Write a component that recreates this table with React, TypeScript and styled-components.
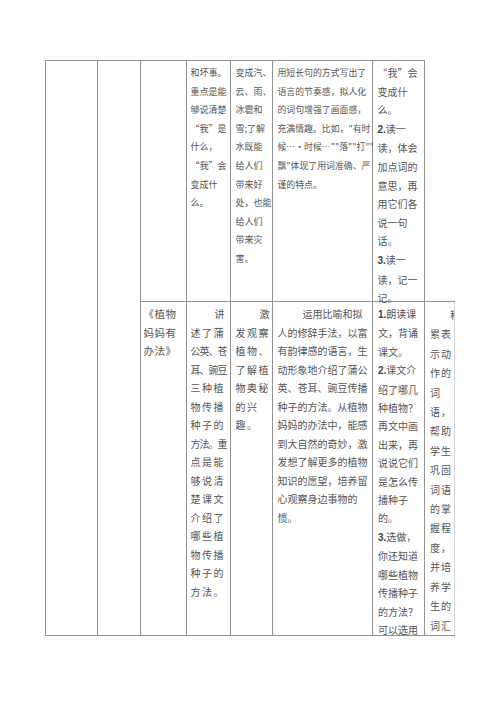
import React from 'react';
import styled, { createGlobalStyle, css } from 'styled-components';

const Global = createGlobalStyle`
  html, body { margin: 0; padding: 0; background: #fff; }
  body { font-family: "Noto Sans CJK SC", "Noto Sans", sans-serif; color: #555; }
`;

const Page = styled.div`
  width: 500px;
  height: 707px;
  box-sizing: border-box;
  padding: 60px 0 0 45px;
  background: #fff;
  overflow: hidden;
`;

const Table = styled.table`
  border-collapse: collapse;
  table-layout: fixed;
  width: 409px;
`;

const Cell = styled.td<{ $open?: boolean; $faint?: boolean }>`
  border: 1px solid #929292;
  padding: 0;
  vertical-align: top;
  ${(p) =>
    p.$open &&
    css`
      border-top: none;
      border-right: none;
    `}
  ${(p) =>
    p.$faint &&
    css`
      border-right-color: #d4d4d4;
    `}
`;

const Body = styled.div<{ $h: number; $size: number; $lh: number; $padL: number; $clip?: boolean }>`
  box-sizing: border-box;
  height: ${(p) => p.$h}px;
  padding: 3px 0 0 ${(p) => p.$padL}px;
  font-size: ${(p) => p.$size}px;
  line-height: ${(p) => p.$lh}px;
  overflow: ${(p) => (p.$clip ? 'hidden' : 'visible')};
`;

const Line = styled.div<{ $indent?: number; $ls?: number }>`
  white-space: nowrap;
  padding-left: ${(p) => p.$indent ?? 0}px;
  letter-spacing: ${(p) => p.$ls ?? 0}px;
`;

const Num = styled.span`
  font-family: "Liberation Sans", Arial, sans-serif;
  font-weight: 700;
  letter-spacing: 0;
  color: #3f3f3f;
`;

type LineSpec = string | { t: string; indent?: number; ls?: number };

type ColSpec = {
  lines: LineSpec[];
  size: number;
  lh: number;
  padL: number;
  ls?: number;
  clip?: boolean;
  faint?: boolean;
};

const renderText = (t: string) => {
  const m = t.match(/^(\d\.)(.*)$/);
  if (m) {
    return (
      <>
        <Num>{m[1]}</Num>
        {m[2]}
      </>
    );
  }
  return t;
};

const TextCell: React.FC<{ col: ColSpec; h: number }> = ({ col, h }) => (
  <Cell $faint={col.faint}>
    <Body $h={h} $size={col.size} $lh={col.lh} $padL={col.padL} $clip={col.clip}>
      {col.lines.map((l, i) => {
        const spec = typeof l === 'string' ? { t: l } : l;
        return (
          <Line key={i} $indent={spec.indent} $ls={spec.ls ?? col.ls}>
            {renderText(spec.t)}
          </Line>
        );
      })}
    </Body>
  </Cell>
);

const row1: ColSpec[] = [
  { size: 9, lh: 18.6, padL: 3.5, lines: [] },
  {
    size: 9,
    lh: 18.6,
    padL: 3.5,
    lines: ['和坏事。', '重点是能', '够说清楚', '“我”是', '什么，', '“我”会', '变成什', '么。'],
  },
  {
    size: 9,
    lh: 18.6,
    padL: 4.5,
    lines: ['变成汽、', '云、雨、', '冰雹和', '雪;了解', '水既能', '给人们', '带来好', '处，也能', '给人们', '带来灾', '害。'],
  },
  {
    size: 8.9,
    lh: 18.6,
    padL: 4.5,
    lines: [
      '用短长句的方式写出了',
      '语言的节奏感，拟人化',
      '的词句增强了画面感，',
      '充满情趣。比如，"有时',
      '候…•时候…""落""打""',
      '飘"体现了用词准确、严',
      '谨的特点。',
    ],
  },
  {
    size: 10,
    lh: 18.6,
    padL: 4.5,
    lines: ['“我”会', '变成什', '么。', '2.读一', '读，体会', '加点词的', '意思，再', '用它们各', '说一句', '话。', '3.读一', '读，记一', '记。'],
  },
];

const tight = (t: string) => ({ t, ls: -1 });

const row2: ColSpec[] = [
  { size: 10.5, lh: 18.5, padL: 2.5, ls: 0.5, lines: ['《植物', '妈妈有', '办法》'] },
  {
    size: 10,
    lh: 18.5,
    padL: 3.5,
    ls: 1.5,
    lines: [
      { t: '讲', indent: 24 },
      '述了蒲',
      tight('公英、苍'),
      tight('耳、豌豆'),
      '三种植',
      '物传播',
      '种子的',
      tight('方法。重'),
      '点是能',
      '够说清',
      '楚课文',
      '介绍了',
      '哪些植',
      '物传播',
      '种子的',
      '方法。',
    ],
  },
  {
    size: 10,
    lh: 18.5,
    padL: 4.5,
    ls: 1.5,
    lines: [{ t: '激', indent: 24 }, '发观察', '植物、', '了解植', '物奥秘', '的兴', '趣。'],
  },
  {
    size: 10,
    lh: 18.5,
    padL: 4.5,
    lines: [
      { t: '运用比喻和拟', indent: 25 },
      '人的修辞手法，以富',
      '有韵律感的语言，生',
      '动形象地介绍了蒲公',
      '英、苍耳、豌豆传播',
      '种子的方法。从植物',
      '妈妈的办法中，能感',
      '到大自然的奇妙，激',
      '发想了解更多的植物',
      '知识的愿望，培养留',
      '心观察身边事物的',
      '惯。',
    ],
  },
  {
    size: 10,
    lh: 18.4,
    padL: 5,
    lines: [
      '1.朗读课',
      '文，背诵',
      '课文。',
      '2.课文介',
      '绍了哪几',
      '种植物？',
      '再文中画',
      '出来，再',
      '说说它们',
      '是怎么传',
      '播种子',
      '的。',
      '3.选做，',
      '你还知道',
      '哪些植物',
      '传播种子',
      '的方法？',
      '可以选用',
    ],
  },
  {
    size: 10,
    lh: 19.4,
    padL: 5,
    ls: 1,
    clip: true,
    faint: true,
    lines: [
      { t: '积', indent: 20 },
      '累表',
      '示动',
      '作的',
      '词',
      '语，',
      '帮助',
      '学生',
      '巩固',
      '词语',
      '的掌',
      '握程',
      '度，',
      '并培',
      '养学',
      '生的',
      '词汇',
    ],
  },
];

const widths = [52, 43, 46, 44, 42, 100, 52, 30];

export default function App() {
  return (
    <>
      <Global />
      <Page>
        <Table>
          <colgroup>
            {widths.map((w, i) => (
              <col key={i} style={{ width: w }} />
            ))}
          </colgroup>
          <tbody>
            <tr>
              <Cell rowSpan={2} />
              <Cell rowSpan={2} />
              {row1.map((c, i) => (
                <TextCell key={i} col={c} h={240} />
              ))}
              <Cell $open />
            </tr>
            <tr>
              {row2.map((c, i) => (
                <TextCell key={i} col={c} h={333} />
              ))}
            </tr>
          </tbody>
        </Table>
      </Page>
    </>
  );
}
